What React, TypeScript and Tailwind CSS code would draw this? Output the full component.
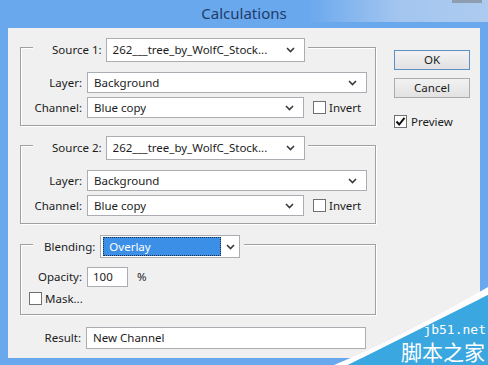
import React from 'react';

const font = { fontFamily: '"Noto Sans", "Open Sans", Arial, sans-serif' };

const Chevron = () => (
  <svg width="9" height="6" viewBox="0 0 9 6" className="shrink-0">
    <path d="M1 1 L4.5 4.5 L8 1" fill="none" stroke="#3a3a3a" strokeWidth="1.6" />
  </svg>
);

const Select = ({ value, w, h }: { value: string; w: string; h: string }) => (
  <div className={`${w} ${h} flex items-center justify-between bg-white border border-[#abadb3] pl-[6px] pr-[9px] shrink-0`}>
    <span className="truncate">{value}</span>
    <Chevron />
  </div>
);

const Checkbox = ({ checked }: { checked?: boolean }) => (
  <div className="w-[13px] h-[13px] bg-white border border-[#707070] flex items-center justify-center shrink-0">
    {checked && (
      <svg width="11" height="11" viewBox="0 0 11 11">
        <path d="M1.5 5.5 L4.2 8.5 L9.5 1.8" fill="none" stroke="#111" strokeWidth="2" />
      </svg>
    )}
  </div>
);

const Label = ({ children }: { children: React.ReactNode }) => (
  <div className="w-[62px] text-right pr-[1px] shrink-0">{children}</div>
);

const SourceGroup = ({ n, top }: { n: number; top: string }) => (
  <div className={`${top} w-[356px] border border-[#a0a0a0] shadow-[inset_1px_1px_0_#ffffff,1px_1px_0_#ffffff] flex flex-col pb-[7px]`}>
    <div className="-mt-[10px] ml-[12px] flex items-center bg-[#f0f0f0] pl-[19px] pr-[3px] self-start gap-[4px]">
      <span>Source {n}:</span>
      <Select value="262___tree_by_WolfC_Stock..." w="w-[199px]" h="h-[24px]" />
    </div>
    <div className="mt-[10px] flex items-center gap-[4px]">
      <Label>Layer:</Label>
      <Select value="Background" w="w-[280px]" h="h-[21px]" />
    </div>
    <div className="mt-[4px] flex items-center">
      <Label>Channel:</Label>
      <div className="ml-[4px]">
        <Select value="Blue copy" w="w-[217px]" h="h-[21px]" />
      </div>
      <div className="ml-[9px] flex items-center gap-[3px]">
        <Checkbox />
        <span>Invert</span>
      </div>
    </div>
  </div>
);

const Button = ({ children, primary }: { children: React.ReactNode; primary?: boolean }) => (
  <div
    className={`w-[76px] h-[20px] flex items-center justify-center border bg-gradient-to-b from-[#f2f2f2] to-[#e2e2e2] ${
      primary ? 'border-[#5c8fc4]' : 'border-[#acacac]'
    }`}
  >
    {children}
  </div>
);

export default function App() {
  return (
    <div style={font} className="relative w-[488px] h-[365px] overflow-hidden bg-[#6aa8ee] text-[11.5px] text-[#1c1c1c] flex flex-col">
      <div className="absolute right-0 top-0 w-[180px] h-[22px] bg-gradient-to-r from-[#6aa8ee] via-[#a9c9ef] to-[#b5cff0] opacity-90" />
      <div className="absolute right-[6px] top-0 w-[30px] h-[3px] bg-[#8e9db0]" />

      <div className="h-[28px] flex items-center justify-center relative">
        <span className="text-[15px] text-[#1d3c68] -mt-[1px]">Calculations</span>
      </div>

      <div className="ml-[8px] w-[472px] h-[330px] bg-[#f0f0f0] flex">
        <div className="pl-[12px] flex flex-col">
          <SourceGroup n={1} top="mt-[19px]" />
          <SourceGroup n={2} top="mt-[19px]" />

          <div className="mt-[20px] w-[356px] border border-[#a0a0a0] shadow-[inset_1px_1px_0_#ffffff,1px_1px_0_#ffffff] flex flex-col pb-[9px]">
            <div className="-mt-[10px] ml-[12px] flex items-center bg-[#f0f0f0] pl-[11px] pr-[4px] self-start gap-[5px]">
              <span>Blending:</span>
              <div className="w-[140px] h-[23px] bg-white border border-[#abadb3] flex items-center">
                <div className="ml-[2px] w-[118px] h-[19px] bg-[#3b8fe6] border border-dotted border-[#1a2a40] text-white flex items-center pl-[5px]">
                  Overlay
                </div>
                <div className="flex-1 flex items-center justify-center">
                  <Chevron />
                </div>
              </div>
            </div>
            <div className="mt-[9px] flex items-center gap-[4px]">
              <Label>Opacity:</Label>
              <div className="w-[41px] h-[20px] bg-white border border-[#abadb3] flex items-center pl-[5px]">100</div>
              <span className="ml-[5px]">%</span>
            </div>
            <div className="mt-[5px] ml-[8px] flex items-center gap-[3px] h-[13px]">
              <Checkbox />
              <span>Mask...</span>
            </div>
          </div>

          <div className="mt-[12px] flex items-center gap-[4px]">
            <Label>Result:</Label>
            <div className="w-[280px] h-[22px] bg-white border border-[#abadb3] flex items-center pl-[6px]">New Channel</div>
          </div>
        </div>

        <div className="ml-[18px] pt-[22px] flex flex-col">
          <Button primary>OK</Button>
          <div className="mt-[8px]">
            <Button>Cancel</Button>
          </div>
          <div className="mt-[15px] flex items-center gap-[4px]">
            <Checkbox checked />
            <span>Preview</span>
          </div>
        </div>
      </div>

      {/* watermark */}
      <svg className="absolute left-0 top-0" width="488" height="365" viewBox="0 0 488 365">
        <path d="M334 365 Q 400 338 488 287 L488 295 L348 365 Z" fill="#ffffff" />
        <path d="M348 365 L488 295 L488 365 Z" fill="#3aa7e0" />
      </svg>
      <div className="absolute right-[3px] bottom-0 flex flex-col items-end text-white">
        <span className="text-[13px] leading-[15px] mr-[-1px]" style={{ fontFamily: '"DejaVu Sans Mono", monospace' }}>
          jb51.net
        </span>
        <span className="text-[21px] leading-[28px]" style={{ fontFamily: '"Noto Sans CJK SC", sans-serif' }}>
          脚本之家
        </span>
      </div>
    </div>
  );
}
